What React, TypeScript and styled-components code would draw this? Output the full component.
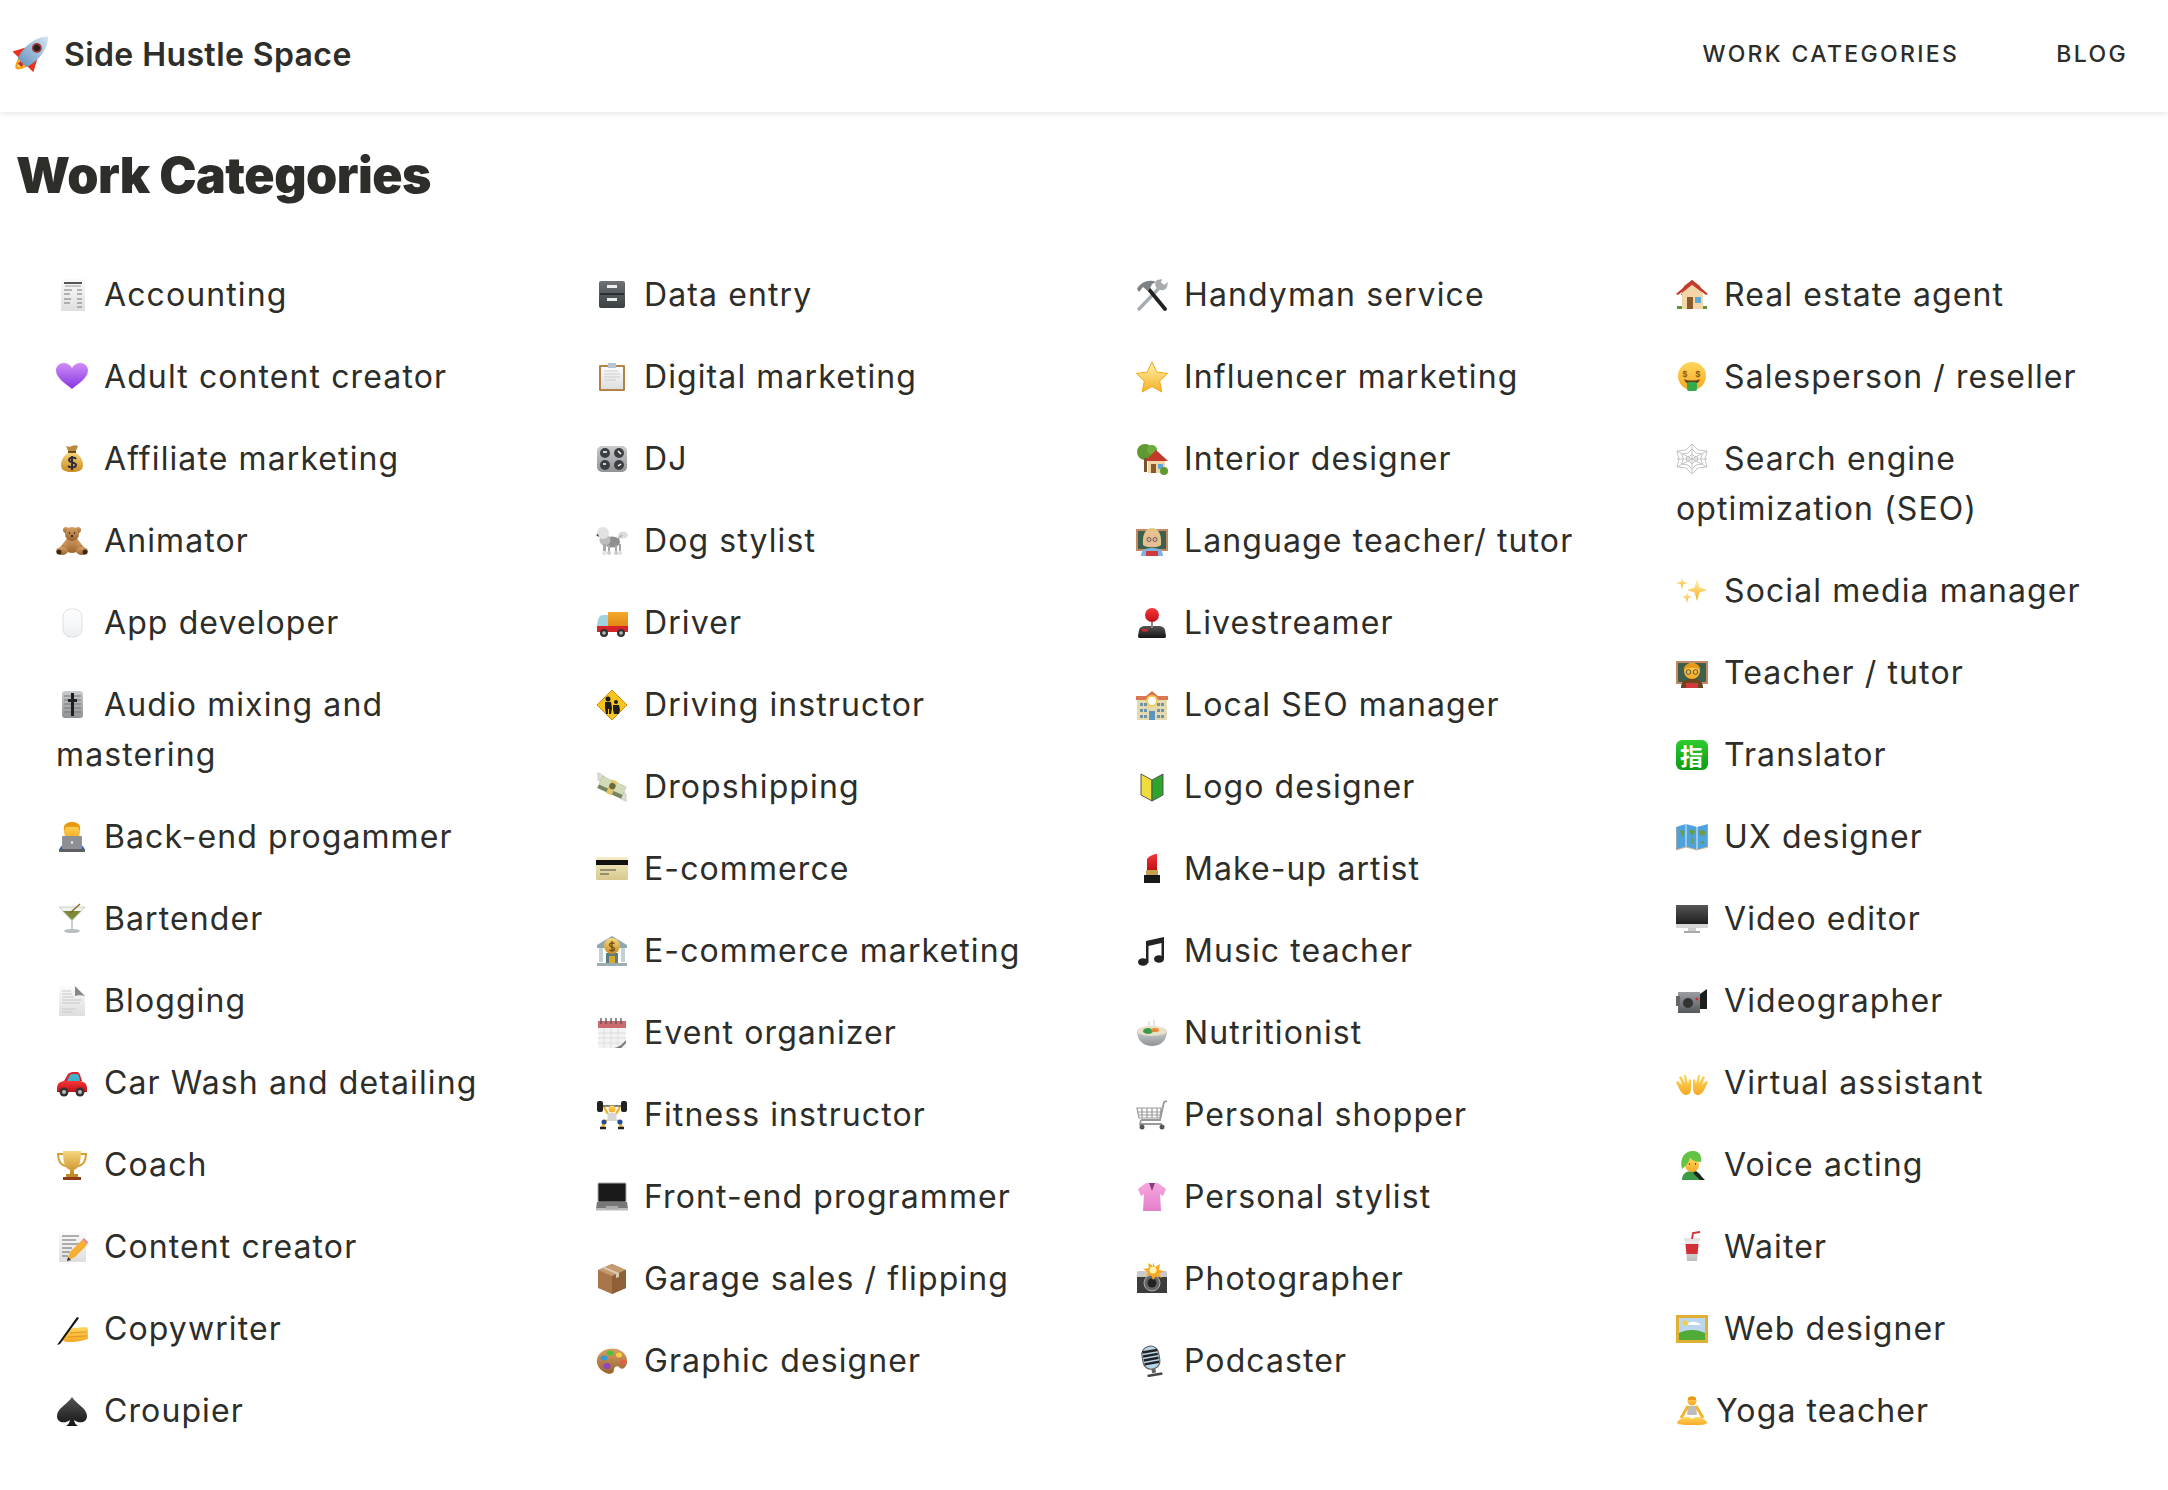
import React from "react";
import styled, { createGlobalStyle } from "styled-components";

const Global = createGlobalStyle`
  html, body { margin: 0; padding: 0; background: #fff; }
  body { font-family: "Inter", "Liberation Sans", sans-serif; color: #2d2d2a; }
`;
const Page = styled.div`width: 2168px; min-height: 1490px; background: #fff;`;
const Header = styled.header`
  height: 112px; box-sizing: border-box; display: flex; align-items: center; justify-content: space-between;
  padding: 0 40px 4px 16px; box-shadow: 0 1px 6px rgba(0,0,0,.12);
`;
const Brand = styled.a`display: flex; align-items: center; gap: 16px; font-size: 32px; font-weight: 600; letter-spacing: 0.4px;`;
const Nav = styled.nav`display: flex; gap: 97px;`;
const NavLink = styled.a`font-size: 23px; font-weight: 500; letter-spacing: 2.35px; text-transform: uppercase;`;
const Main = styled.main`padding: 0 16px;`;
const Title = styled.h1`margin: 0; padding-top: 34px; font-size: 50px; line-height: 58px; font-weight: 900; letter-spacing: -0.5px;`;
const Columns = styled.div`display: grid; grid-template-columns: repeat(4, 476px); column-gap: 64px; margin: 66px 0 0 40px;`;
const Column = styled.ul`list-style: none; margin: 0; padding: 0;`;
const Item = styled.li`font-size: 32px; line-height: 50px; margin-bottom: 32px; letter-spacing: 1.1px;`;
const IconBox = styled.svg<{ $tight?: boolean }>`
  width: 32px; height: 32px; vertical-align: -5px; margin-right: ${p => (p.$tight ? 8 : 16)}px; flex: none;
`;
const BrandIcon = styled.svg`width: 32px; height: 32px; flex: none; overflow: visible;`;
const Defs = styled.svg`position: absolute; width: 0; height: 0;`;

const lg = (id: string, a: string, b: string) => (
  <linearGradient id={id} x1="0" y1="0" x2="0" y2="1"><stop offset="0" stopColor={a} /><stop offset="1" stopColor={b} /></linearGradient>
);

const Skin = "url(#gSkin)";
const face = (cx: number, cy: number, r: number) => <circle cx={cx} cy={cy} r={r} fill={Skin} />;

const icons: Record<string, React.ReactNode> = {
  rocket: <g transform="rotate(45 16 16)"><path d="M11 25Q16 41 21 25Z" fill="#f7a41d" /><path d="M13 26Q16 35 19 26Z" fill="#ffe46a" /><path d="M10 14L4 25L11 25Z" fill="#e8321f" /><path d="M22 14L28 25L21 25Z" fill="#e8321f" /><path d="M16-4C24 4 24 17 21 26H11C8 17 8 4 16-4Z" fill="url(#gSteel)" /><circle cx="16" cy="9" r="4" fill="#a33" /><circle cx="16" cy="9" r="2.6" fill="#222" /><path d="M14 26h4v3h-4z" fill="#c33" /></g>,
  receipt: <g><rect x="5" y="0" width="24" height="32" fill="url(#gPaper)" /><path d="M8 3h18v2H8z" fill="#555" /><path d="M9 6.500h16v1H9z" fill="#999" /><path d="M8 11h8M21 11h5M8 15h6M21 15h5M8 20h7M21 20h5M8 24h6M21 24h5M21 28h5" stroke="#777" strokeWidth="1.200" /></g>,
  heart: <path d="M16 28C10 23 0 17 0 9.500 0 4.500 4 2 8 2c3.500 0 6.500 2 8 5 1.500-3 4.500-5 8-5 4 0 8 2.500 8 7.500C32 17 22 23 16 28Z" fill="url(#gPurple)" />,
  moneybag: <g><path d="M10 3c2 1 4 1 6 0s4-1 6 0l-3 7h-6z" fill="#b88a3a" /><path d="M13 9h6c6 4 8 9 8 13 0 6-5 7-11 7S5 28 5 22c0-4 2-9 8-13Z" fill="url(#gGold)" /><path d="M12 9h8" stroke="#6d4b18" strokeWidth="2" /><path d="M20 16c-1-2-7-2-7 1s7 2 7 5-6 3-8 1M16 13v14" stroke="#2d2d3a" strokeWidth="2" fill="none" /></g>,
  teddy: <g fill="url(#gBrown)"><circle cx="10" cy="5" r="3" /><circle cx="22" cy="5" r="3" /><ellipse cx="16" cy="20" rx="8" ry="8" /><circle cx="16" cy="9" r="7" /><path d="M9 16L2 25l4 3 6-7zM23 16l7 9-4 3-6-7z" /><ellipse cx="6" cy="26" rx="6" ry="4" /><ellipse cx="26" cy="26" rx="6" ry="4" /><ellipse cx="3" cy="27" rx="2.500" ry="2.500" fill="#3c2a18" /><ellipse cx="29" cy="27" rx="2.500" ry="2.500" fill="#3c2a18" /><path d="M13 8h1M18 8h1M15 11h2" stroke="#2a1a0c" strokeWidth="1.500" /></g>,
  mouse: <rect x="7" y="2" width="19" height="28" rx="8" fill="url(#gMouse)" stroke="#dde1e4" />,
  fader: <g><rect x="6" y="2" width="21" height="27" rx="3" fill="url(#gMetal)" /><path d="M8 7h17M8 11h17M8 15h17M8 19h17M8 23h17" stroke="#777" /><path d="M15 4h3v23h-3z" fill="#1e1e1e" /><path d="M12 10h9v3h-9z" fill="#222" /></g>,
  coder: <g><path d="M3 31c0-6 5-9 13-9s13 3 13 9z" fill="#2e5fc0" /><path d="M9 3h14c2 4 1 9 0 12-2 4-12 4-14 0C8 12 7 7 9 3Z" fill={Skin} /><path d="M8 10C7 3 11 1 16 1s9 2 8 9l-2-4H10z" fill="#e89a16" /><rect x="6" y="15" width="20" height="13" rx="1" fill="#8d8f94" /><path d="M3 28h26v3H3z" fill="#5e6066" /><circle cx="16" cy="21.500" r="1.200" fill="#eee" /></g>,
  cocktail: <g><path d="M3 4h26L16 18Z" fill="#eef2ee" stroke="#c8cfc8" /><path d="M7 8h18L16 17Z" fill="#7c8a3a" /><path d="M15 17h2v10h-2z" fill="#c9cfd1" /><ellipse cx="16" cy="28" rx="8" ry="2" fill="#b7bdc0" /><path d="M14 10l10-9" stroke="#8a6a2a" strokeWidth="1.500" /></g>,
  page: <g><path d="M3 1h16l10 10v20H3z" fill="url(#gPaper)" /><path d="M19 1l10 10c-3-1-8-1-10 0z" fill="#888" /><path d="M6 6h9M6 9h10M6 12h12M6 15h20M6 18h18M6 24h14M6 27h10" stroke="#c8c8c8" /></g>,
  car: <g><path d="M8 14l4-7c1-1 3-2 5-2h4c2 0 3 2 5 9z" fill="#d6222a" /><path d="M11 14l3-6c1-1 2-1 3-1h4c1 0 2 1 3 7z" fill="#3fb4cc" /><path d="M1 22c0-6 3-8 9-8h12c6 0 9 2 9 8v3H1z" fill="url(#gRed)" /><circle cx="8" cy="25" r="4.500" fill="#333" /><circle cx="8" cy="25" r="2" fill="#bbb" /><circle cx="24" cy="25" r="4.500" fill="#333" /><circle cx="24" cy="25" r="2" fill="#bbb" /></g>,
  trophy: <g><path d="M8 5H2c0 8 3 11 8 12M24 5h6c0 8-3 11-8 12" fill="none" stroke="#d6a02f" strokeWidth="2" /><path d="M7 2h18c0 12-2 17-7 19v4h-4v-4C9 19 7 14 7 2Z" fill="url(#gGold)" /><path d="M10 25h12v3H10z" fill="#c28b25" /><path d="M7 28h18v3H7z" fill="#8c3c1a" /></g>,
  memo: <g><rect x="3" y="1" width="27" height="30" fill="url(#gPaper)" /><path d="M6 5h17M6 9h14M6 13h17M6 17h10M6 21h8M6 25h6" stroke="#666" /><path d="M11 30l3-9L26 9l5 5-12 12z" fill="#f3b033" /><path d="M26 9l2-2 4 4-1 3z" fill="#ec8a8a" /><path d="M11 30l1-4 3 3z" fill="#333" /></g>,
  writing: <g><path d="M8 22c3-3 6-6 9-7l12-1c2 0 3 1 3 3v9c-6 2-12 3-16 3-5 0-7 0-10-2Z" fill={Skin} /><path d="M14 20c4 0 10-1 17-1M12 24c5 0 12-1 19-1" stroke="#d68c16" strokeWidth=".8" fill="none" /><path d="M1 32L21 4l2 1L4 31Z" fill="#111" /></g>,
  spade: <path d="M16 2C12 9 1 13 1 21c0 7 8 8 13 4-.5 3-2 5-4 6h12c-2-1-3.500-3-4-6 5 4 13 3 13-4 0-8-11-12-15-19Z" fill="url(#gDark)" />,
  cabinet: <g><rect x="3" y="2" width="26" height="27" rx="2" fill="url(#gSlate)" /><path d="M4 15h24" stroke="#222" strokeWidth="1.500" /><rect x="11" y="6" width="10" height="3" fill="#eee" /><rect x="11" y="19" width="10" height="3" fill="#eee" /></g>,
  clipboard: <g><rect x="3" y="4" width="26" height="26" rx="1" fill="#b5834a" /><rect x="5" y="6" width="22" height="22" fill="url(#gPaper)" /><path d="M8 10h14M8 13h16M8 16h16M8 19h12" stroke="#ccc" /><path d="M12 2h8v5h-8z" fill="#b7c5d2" /></g>,
  knobs: <g><rect x="1" y="3" width="30" height="26" rx="5" fill="url(#gMetal)" /><g fill="#3c3f42"><circle cx="9" cy="10" r="5" /><circle cx="23" cy="10" r="5" /><circle cx="9" cy="22" r="5" /><circle cx="23" cy="22" r="5" /></g><path d="M7 9h4M22 8l3 3M7 21h3M22 23l3-2" stroke="#fff" strokeWidth="1.500" /></g>,
  poodle: <g><ellipse cx="27" cy="10" rx="5" ry="3.500" fill="#dcdcdc" /><path d="M20 16l6-6" stroke="#aaa" strokeWidth="1.500" /><ellipse cx="16" cy="17" rx="8" ry="5.500" fill="#8f8f8f" /><circle cx="9" cy="15" r="5.500" fill="#bdbdbd" /><circle cx="7" cy="8" r="6" fill="#e2e2e2" /><path d="M2 9L0 10l3 2z" fill="#333" /><path d="M7 19h3v10H7zM12 20h2v9h-2zM19 20h2v9h-2zM23 19h2v10h-2z" fill="#a8a8a8" /><circle cx="8.500" cy="28" r="2.200" fill="#e2e2e2" /><circle cx="13" cy="28" r="2" fill="#ccc" /><circle cx="20" cy="28" r="2" fill="#ccc" /><circle cx="24" cy="28" r="2.200" fill="#e2e2e2" /></g>,
  truck: <g><path d="M12 5h20v20H12z" fill="url(#gOrange)" /><path d="M1 21c0-6 1-10 3-12 1-1 3-1 8-1v13z" fill="#9fd3e0" /><path d="M1 19h31v6H1z" fill="#d8232a" /><circle cx="8" cy="26" r="4" fill="#333" /><circle cx="8" cy="26" r="1.800" fill="#bbb" /><circle cx="25" cy="26" r="4" fill="#333" /><circle cx="25" cy="26" r="1.800" fill="#bbb" /></g>,
  crossing: <g><path d="M16 1l15 15-15 15L1 16Z" fill="#f8c41e" stroke="#c98d10" /><g fill="#1d1d1d"><circle cx="12" cy="10" r="2.500" /><circle cx="20" cy="13" r="2" /><path d="M9 13h6l1 6-1 6h-2v-5h-1v5h-2l-1-6zM17 16h6l1 5-1 4h-5l-1-4z" /></g></g>,
  flymoney: <g transform="rotate(24 16 16)"><path d="M10 12C5 9 1 8-3 9c2 2 2 4 3 6 3 2 7 2 10 1zM22 20c5 3 9 4 13 3-2-2-2-4-3-6-3-2-7-2-10-1z" fill="#dcdcd2" stroke="#b5b5a8" strokeWidth=".5" /><rect x="3" y="10" width="26" height="13" fill="#76855a" /><rect x="3" y="10" width="26" height="9" fill="#d2dbb8" /><rect x="13" y="9" width="6" height="15" fill="#e6c46b" /><circle cx="16" cy="15" r="3.200" fill="#6b6a3a" /></g>,
  card: <g><rect x="0" y="4" width="32" height="23" rx="1.500" fill="url(#gCream)" /><path d="M0 7h32v5H0z" fill="#111" /><path d="M4 17h16M4 21h9" stroke="#7b7a5b" strokeWidth="1.500" /></g>,
  bank: <g><path d="M1 10L16 1l15 9v3H1z" fill="#8fa6ae" /><path d="M3 13h4v14H3zM25 13h4v14h-4z" fill="#c5d0d2" /><path d="M10 18h12v10H10z" fill="#5a7c84" /><path d="M13 21h6v8h-6z" fill="#d7a82a" /><path d="M1 28h30v3H1z" fill="#9daeb2" /><circle cx="16" cy="11" r="8" fill="url(#gGold)" /><path d="M18.500 8.500c-1-1-5-1-5 1.500s5 1.500 5 4-4 2-5 1M16 6v10" stroke="#6a4c10" fill="none" strokeWidth="1.300" /></g>,
  calendar: <g><rect x="2" y="4" width="28" height="27" fill="#f3f3f3" /><path d="M2 4h28v7H2z" fill="#cb6a6f" /><path d="M5 1v6M10 1v6M15 1v6M20 1v6M25 1v6" stroke="#555" strokeWidth="1.300" /><path d="M2 16h28M2 21h28M2 26h28M8 11v20M15 11v20M22 11v20" stroke="#ddd" /><path d="M18 31c5-1 9-4 12-8v3l-5 5z" fill="#777" /></g>,
  lifter: <g><path d="M5 7h22" stroke="#555" strokeWidth="1.500" /><rect x="1" y="2" width="6" height="11" rx="2" fill="#222" /><rect x="25" y="2" width="6" height="11" rx="2" fill="#222" /><path d="M8 8l4 7M24 8l-4 7" stroke="#f4b52d" strokeWidth="2.500" />{face(16, 10, 3.500)}<path d="M12 14h8l1 8H11z" fill="#d6d6d6" /><path d="M11 22c-3 0-4 2-4 6M21 22c3 0 4 2 4 6" stroke="#f4b52d" strokeWidth="3" fill="none" /><circle cx="8" cy="23" r="2.500" fill="#1e4d9c" /><circle cx="24" cy="23" r="2.500" fill="#1e4d9c" /><path d="M4 29h6M22 29h6" stroke="#222" strokeWidth="2.500" /></g>,
  laptop: <g><rect x="2" y="2" width="28" height="19" rx="1" fill="#1a1a1a" stroke="#aaa" /><path d="M1 21h30l1 7H0z" fill="#777" /><path d="M0 27h32v2.500H0z" fill="#b9b9b9" /><rect x="10" y="25" width="12" height="3" fill="#aaa" /></g>,
  box: <g><path d="M16 1L2 7v18l14 6 14-6V7z" fill="#a9764a" /><path d="M2 7l14 6 14-6-14-6z" fill="#c79a6e" /><path d="M16 13v18l14-6V7z" fill="#8f5f38" /><path d="M9 4l14 6v4l-3 1v-4L6 5z" fill="#d9c8b2" /></g>,
  palette: <g><path d="M1 14C3 6 12 2 21 4c7 2 11 8 10 14-1 5-5 7-7 5-2-3-6-2-6 2 0 4-5 5-10 2C3 24 0 19 1 14Z" fill="url(#gBrown)" /><ellipse cx="8" cy="13" rx="3.500" ry="2.500" fill="#2f9ad6" /><ellipse cx="14" cy="8" rx="3.500" ry="2.500" fill="#4cbf3d" /><ellipse cx="23" cy="10" rx="3" ry="2.500" fill="#f3d03e" /><ellipse cx="27" cy="17" rx="2.500" ry="2.500" fill="#ee5a4a" /><ellipse cx="11" cy="21" rx="3.500" ry="3" fill="#8e44c9" /></g>,
  tools: <g><path d="M3 30L26 6" stroke="#a7acb1" strokeWidth="3.400" strokeLinecap="round" /><path d="M29 30L11 8" stroke="#222" strokeWidth="3.800" strokeLinecap="round" /><path d="M1 10C5 2 14 0 20 3l-4 2c-1 2-2 5-4 7L7 8l-4 5z" fill="#7c8186" /><path d="M21 1c-3 3-2 7 1 9s7 2 9-2l1-5-4 3-3-2 1-4z" fill="#a7acb1" /></g>,
  star: <path d="M16 1l4.700 10 11 1.400-8 7.600 2.100 11L16 25.500 6.200 31l2.100-11-8-7.600 11-1.400Z" fill="url(#gStar)" stroke="#f1a91b" />,
  garden: <g><circle cx="9" cy="9" r="8" fill="#5d9b32" /><circle cx="16" cy="7" r="5" fill="#6cab3c" /><path d="M8 15h3v14H8z" fill="#7a5230" /><path d="M12 17h17v13H12z" fill="#f3d6a5" /><path d="M9 18L20 7l12 11z" fill="#c23a2a" /><rect x="15" y="21" width="5" height="9" fill="#8a5a2b" /><rect x="22" y="21" width="5" height="5" fill="#5fa9d8" /><circle cx="28" cy="28" r="4" fill="#5d9b32" /></g>,
  teacherF: <g><rect x="0" y="4" width="32" height="22" fill="#c48a65" /><rect x="2" y="6" width="28" height="18" fill="#3d5f4c" /><path d="M5 31c0-6 4-8 11-8s11 2 11 8z" fill="#7fb2e5" /><path d="M7 20C6 7 11 3 16 3s10 4 9 17c-3 3-15 3-18 0Z" fill="#e2c489" /><circle cx="16" cy="15" r="6.500" fill="#eabb98" /><circle cx="13" cy="14.500" r="2" fill="none" stroke="#444" strokeWidth=".8" /><circle cx="19" cy="14.500" r="2" fill="none" stroke="#444" strokeWidth=".8" /><path d="M10 26h12v5H10z" fill="#d13a3a" /></g>,
  joystick: <g><path d="M3 23c1-3 3-4 6-4h14c3 0 5 1 6 4l1 6c0 2-1 2-3 2H5c-2 0-3 0-3-2z" fill="url(#gDark)" /><path d="M15 12h2v9h-2z" fill="#888" /><circle cx="16" cy="8" r="7" fill="url(#gRed)" /><rect x="6" y="22" width="6" height="2.500" rx="1" fill="#d72a2a" /></g>,
  school: <g><path d="M1 10h30v21H1z" fill="#e5d9b0" /><path d="M0 7h32v4H0z" fill="#d97850" /><path d="M10 7l6-5 6 5z" fill="#d97850" /><circle cx="16" cy="12" r="6" fill="#f6cd52" /><circle cx="16" cy="12" r="4" fill="#fff" /><path d="M13 22h6v9h-6z" fill="#5c95bd" /><path d="M4 14h3v3H4zM8 14h3v3H8zM21 14h3v3h-3zM25 14h3v3h-3zM4 20h3v3H4zM8 20h3v3H8zM21 20h3v3h-3zM25 20h3v3h-3zM4 26h3v3H4zM8 26h3v3H8zM21 26h3v3h-3zM25 26h3v3h-3z" fill="#6e93a6" /></g>,
  beginner: <g><path d="M5 3l11 6v21L5 24Z" fill="#f0dc3c" stroke="#555" /><path d="M27 3L16 9v21l11-6Z" fill="#2da52d" stroke="#555" /></g>,
  lipstick: <g><path d="M11 17V6c2-3 7-5 10-5v16z" fill="url(#gRed)" /><path d="M10 17h12v5H10z" fill="#c5a24f" /><path d="M8 22h16v8H8z" fill="#181818" /></g>,
  notes: <g fill="#222"><path d="M10 6L28 2v22h-2.500V8L12.500 11v17H10z" /><ellipse cx="7" cy="27" rx="5" ry="3.800" /><ellipse cx="23" cy="24" rx="5" ry="3.800" /></g>,
  stew: <g><path d="M13 4c-1 2 1 3 0 5M18 3c-1 2 1 3 0 6" stroke="#ddd" strokeWidth="1.500" fill="none" /><path d="M1 14c0 10 7 15 15 15s15-5 15-15z" fill="url(#gMetal)" /><ellipse cx="16" cy="14" rx="15" ry="5" fill="#e8e0c8" /><ellipse cx="12" cy="14" rx="5" ry="3" fill="#3c9b45" /><ellipse cx="19" cy="13" rx="4" ry="2" fill="#e88a3a" /></g>,
  cart: <g fill="none" stroke="#9a9a9a" strokeWidth="1.200"><path d="M1 9h24l-1 10H3zM1 13h24M2 16h22M6 9v10M11 9v10M16 9v10M21 9v10" /><path d="M31 2l-3 1-4 18H5" strokeWidth="1.800" /><path d="M5 21l-1 4h22" strokeWidth="1.800" /><circle cx="6" cy="28" r="2.500" fill="#555" stroke="none" /><circle cx="26" cy="28" r="2.500" fill="#555" stroke="none" /></g>,
  blouse: <g><path d="M10 2h12l8 6-3 7-3-2 1 17H7l1-17-3 2-3-7Z" fill="url(#gPink)" /><path d="M13 2l3 8 3-8z" fill="#8a3f7a" /></g>,
  camera: <g><rect x="1" y="8" width="30" height="22" rx="1" fill="#c9c9c9" /><rect x="1" y="14" width="30" height="16" fill="#3c3c3c" /><circle cx="16" cy="20" r="8" fill="#666" stroke="#aaa" /><circle cx="16" cy="20" r="4.500" fill="#222" /><path d="M17-1l2 5 5-3-1 6 5 1-5 3 3 4-6-2-3 4-2-5-5 1 2-4-5-3 6-1-1-5 5 3z" fill="#f8a81d" /><circle cx="17" cy="7" r="3.500" fill="#fff3b0" /></g>,
  mic: <g transform="rotate(-10 16 16)"><rect x="7" y="1" width="17" height="23" rx="8" fill="#b7d7ea" stroke="#555" /><path d="M8 6h15M8 10h15M8 14h15M8 18h15" stroke="#222" strokeWidth="2.500" /><path d="M14 24h4v4h-4z" fill="#666" /><path d="M9 30h15" stroke="#444" strokeWidth="2.500" /></g>,
  house: <g><path d="M6 14h21v16H6z" fill="#f2d6a7" /><path d="M0 15L16 1l16 14-2 1L16 5 2 16z" fill="#c23a2a" /><path d="M8 7l8-6 8 6 3 9H5z" fill="#c23a2a" opacity=".9" /><path d="M6 14l10-8 11 8v2H6z" fill="#f2d6a7" /><rect x="11" y="18" width="6" height="12" fill="#8a5a2b" /><rect x="19" y="18" width="6" height="6" fill="#5fa9d8" /><path d="M1 27h5v3H1zM27 27h4v3h-4z" fill="#5d9b32" /></g>,
  moneymouth: <g><circle cx="16" cy="15" r="14" fill={Skin} /><text x="9.500" y="16" fontSize="8" fontWeight="700" fill="#8a5a14" textAnchor="middle" fontFamily="Inter">$</text><text x="22.500" y="16" fontSize="8" fontWeight="700" fill="#8a5a14" textAnchor="middle" fontFamily="Inter">$</text><path d="M8 18c3 2 13 2 16 0-1 4-4 5-8 5s-7-1-8-5Z" fill="#6b3a12" /><rect x="11" y="21" width="10" height="9" rx="2" fill="#35a94a" /></g>,
  web: <g fill="none" stroke="#c4c4c4" strokeWidth="1"><path d="M16 1l6 6 9 1-2 8 2 8-9 1-6 6-6-6-9-1 2-8-2-8 9-1z" /><path d="M16 6l4 4 6 1-1 5 1 5-6 1-4 4-4-4-6-1 1-5-1-5 6-1z" /><path d="M16 11l2.500 2.500 3 .5v4l-3 .5L16 21l-2.500-2.500-3-.5v-4l3-.5zM16 1v30M1 8l30 16M31 8L1 24M1 16h30" /></g>,
  sparkles: <g fill="url(#gStar)"><path d="M21 4l2.500 8.500L31 15l-7.500 2.500L21 26l-2.500-8.500L11 15l7.500-2.500Z" /><path d="M6 2l1.300 4.700L12 8l-4.700 1.300L6 14l-1.300-4.700L0 8l4.700-1.300Z" /><path d="M11 17l1.200 3.800L16 22l-3.800 1.200L11 28l-1.200-4.800L6 22l3.800-1.200Z" /></g>,
  teacherM: <g><rect x="0" y="4" width="32" height="23" fill="#c48a65" /><rect x="2" y="6" width="28" height="19" fill="#3d5f4c" /><path d="M5 31c0-7 4-9 11-9s11 2 11 9z" fill="#6a4522" /><path d="M10 26h12v5H10z" fill="#d13a3a" />{face(16, 14, 8)}<path d="M8 13c-1-9 17-9 16 0-3-3-13-3-16 0Z" fill="#e89a16" /><circle cx="12.500" cy="15" r="2.300" fill="none" stroke="#444" strokeWidth=".9" /><circle cx="19.500" cy="15" r="2.300" fill="none" stroke="#444" strokeWidth=".9" /></g>,
  finger: <g><rect x="0" y="1" width="32" height="30" rx="6" fill="url(#gGreen)" /><text x="16" y="25.500" fontSize="23" fontWeight="700" fill="#fff" textAnchor="middle" fontFamily="Noto Sans CJK TC">指</text></g>,
  map: <g><path d="M0 6l10-3 11 3 11-3v23l-11 3-11-3L0 29Z" fill="#4ea3dd" /><path d="M10 3v23M21 6v23" stroke="#e6eef2" /><path d="M4 10c3-2 5 0 4 3l-2 3zM13 9h5c2 2 0 5-3 5zM15 16c3 0 3 6 1 8zM23 10c4-2 7 0 6 3-2 2-5 2-6 0zM25 20h3v3h-3z" fill="#6f9c3c" /><path d="M0 6v23l10-3 11 3 11-3V3" fill="none" stroke="#d8b48e" /></g>,
  monitor: <g><rect x="0" y="2" width="32" height="22" fill="url(#gDark)" /><path d="M0 21h32v4H0z" fill="#d5d5d5" /><path d="M12 25h8v3h-8z" fill="#ccc" /><path d="M8 28h16v2H8z" fill="#aaa" /></g>,
  camcorder: <g><rect x="2" y="7" width="22" height="21" fill="url(#gSteel2)" /><path d="M24 9l7-5v20h-7z" fill="#1d1d1d" /><path d="M0 11h4v10H0z" fill="#666" /><circle cx="12" cy="18" r="5" fill="#333" /><circle cx="21" cy="14" r="1.500" fill="#c33" /></g>,
  hands: <g fill={Skin}><path d="M0 15l2-1 4 4-3-8 2-1 4 7-1-8 2 0 2 9 1-5 2 1 0 8c0 5-2 7-5 7-4 0-7-6-10-13Z" /><path d="M32 15l-2-1-4 4 3-8-2-1-4 7 1-8-2 0-2 9-1-5-2 1 0 8c0 5 2 7 5 7 4 0 7-6 10-13Z" /></g>,
  singer: <g><path d="M6 31c0-6 4-9 10-9s10 3 10 9z" fill="#3c9b45" /><path d="M20 22l9 9h-5l-7-7z" fill="#222" />{face(16, 16, 7)}<path d="M6 20C3 8 10 1 18 2c7 1 8 7 7 11-3 0-8-1-11-4-1 4-4 8-8 11Z" fill="#62c344" /><path d="M13 15h1M19 15h1" stroke="#333" strokeWidth="1.500" /></g>,
  cup: <g><path d="M9 9h14l-2 21H11z" fill="url(#gMouse2)" /><path d="M9.500 13h13l-.9 10H10.400z" fill="#d32f37" /><path d="M8 7h16v3H8z" fill="#e4e4e4" /><path d="M16 8l1-6 7-1" stroke="#d32f37" strokeWidth="1.800" fill="none" /></g>,
  picture: <g><rect x="0" y="2" width="32" height="28" fill="#e0b034" /><rect x="3" y="5" width="26" height="22" fill="#bcd6ee" /><circle cx="9" cy="10" r="2.500" fill="#f5d03c" /><path d="M3 20c8-4 18-4 26 0v7H3z" fill="#4faa36" /><path d="M12 10c4-2 9-2 13 2H12z" fill="#fff" /></g>,
  yoga: <g><circle cx="16" cy="6" r="4.500" fill={Skin} /><path d="M12 3c1-2 7-2 8 0v2h-8z" fill="#e89a16" /><path d="M12 11h8l1 9H11z" fill="#bdbdbd" /><path d="M12 11L5 23M20 11l7 12" stroke="#f4b52d" strokeWidth="3" /><path d="M1 27c5-6 12-6 15-3 3-3 10-3 15 3 0 3-5 3-15 3S1 30 1 27Z" fill={Skin} /></g>,
};

type Row = [string, string, boolean?];
const data: Row[][] = [
  [["receipt", "Accounting"], ["heart", "Adult content creator"], ["moneybag", "Affiliate marketing"], ["teddy", "Animator"], ["mouse", "App developer"], ["fader", "Audio mixing and mastering"], ["coder", "Back-end progammer"], ["cocktail", "Bartender"], ["page", "Blogging"], ["car", "Car Wash and detailing"], ["trophy", "Coach"], ["memo", "Content creator"], ["writing", "Copywriter"], ["spade", "Croupier"]],
  [["cabinet", "Data entry"], ["clipboard", "Digital marketing"], ["knobs", "DJ"], ["poodle", "Dog stylist"], ["truck", "Driver"], ["crossing", "Driving instructor"], ["flymoney", "Dropshipping"], ["card", "E-commerce"], ["bank", "E-commerce marketing"], ["calendar", "Event organizer"], ["lifter", "Fitness instructor"], ["laptop", "Front-end programmer"], ["box", "Garage sales / flipping"], ["palette", "Graphic designer"]],
  [["tools", "Handyman service"], ["star", "Influencer marketing"], ["garden", "Interior designer"], ["teacherF", "Language teacher/ tutor"], ["joystick", "Livestreamer"], ["school", "Local SEO manager"], ["beginner", "Logo designer"], ["lipstick", "Make-up artist"], ["notes", "Music teacher"], ["stew", "Nutritionist"], ["cart", "Personal shopper"], ["blouse", "Personal stylist"], ["camera", "Photographer"], ["mic", "Podcaster"]],
  [["house", "Real estate agent"], ["moneymouth", "Salesperson / reseller"], ["web", "Search engine optimization (SEO)"], ["sparkles", "Social media manager"], ["teacherM", "Teacher / tutor"], ["finger", "Translator"], ["map", "UX designer"], ["monitor", "Video editor"], ["camcorder", "Videographer"], ["hands", "Virtual assistant"], ["singer", "Voice acting"], ["cup", "Waiter"], ["picture", "Web designer"], ["yoga", "Yoga teacher", true]],
];

export default function App() {
  return (
    <Page>
      <Global />
      <Defs aria-hidden="true">
        <defs>
          {lg("gSkin", "#ffd75e", "#f6a823")}{lg("gGold", "#f7d77e", "#c98b22")}{lg("gPaper", "#fbfbfb", "#dedede")}
          {lg("gPurple", "#cf8cf6", "#8536e0")}{lg("gBrown", "#d9a066", "#98632f")}{lg("gMetal", "#c9cdd0", "#8f9396")}
          {lg("gRed", "#f6383a", "#bf1016")}{lg("gDark", "#555", "#161616")}{lg("gSlate", "#6d7377", "#3a3f42")}
          {lg("gOrange", "#f5a92a", "#d97b0c")}{lg("gCream", "#f5edc8", "#d8c88e")}{lg("gStar", "#fff3b0", "#f6b021")}
          {lg("gPink", "#f6a6e0", "#e57fc8")}{lg("gGreen", "#2ecb2e", "#0c9c12")}{lg("gSteel", "#d4e6f4", "#6f9bc2")}
          {lg("gSteel2", "#9a9ea2", "#55595c")}{lg("gMouse", "#ffffff", "#eceff1")}{lg("gMouse2", "#f0f0f0", "#bdbdbd")}
        </defs>
      </Defs>
      <Header>
        <Brand><BrandIcon viewBox="4 3 26 26">{icons.rocket}</BrandIcon>Side Hustle Space</Brand>
        <Nav><NavLink>Work Categories</NavLink><NavLink>Blog</NavLink></Nav>
      </Header>
      <Main>
        <Title>Work Categories</Title>
        <Columns>
          {data.map((col, i) => (
            <Column key={i}>
              {col.map(([icon, label, tight]) => (
                <Item key={label}>
                  <IconBox viewBox="0 0 32 32" $tight={tight}>{icons[icon]}</IconBox>{label}
                </Item>
              ))}
            </Column>
          ))}
        </Columns>
      </Main>
    </Page>
  );
}
